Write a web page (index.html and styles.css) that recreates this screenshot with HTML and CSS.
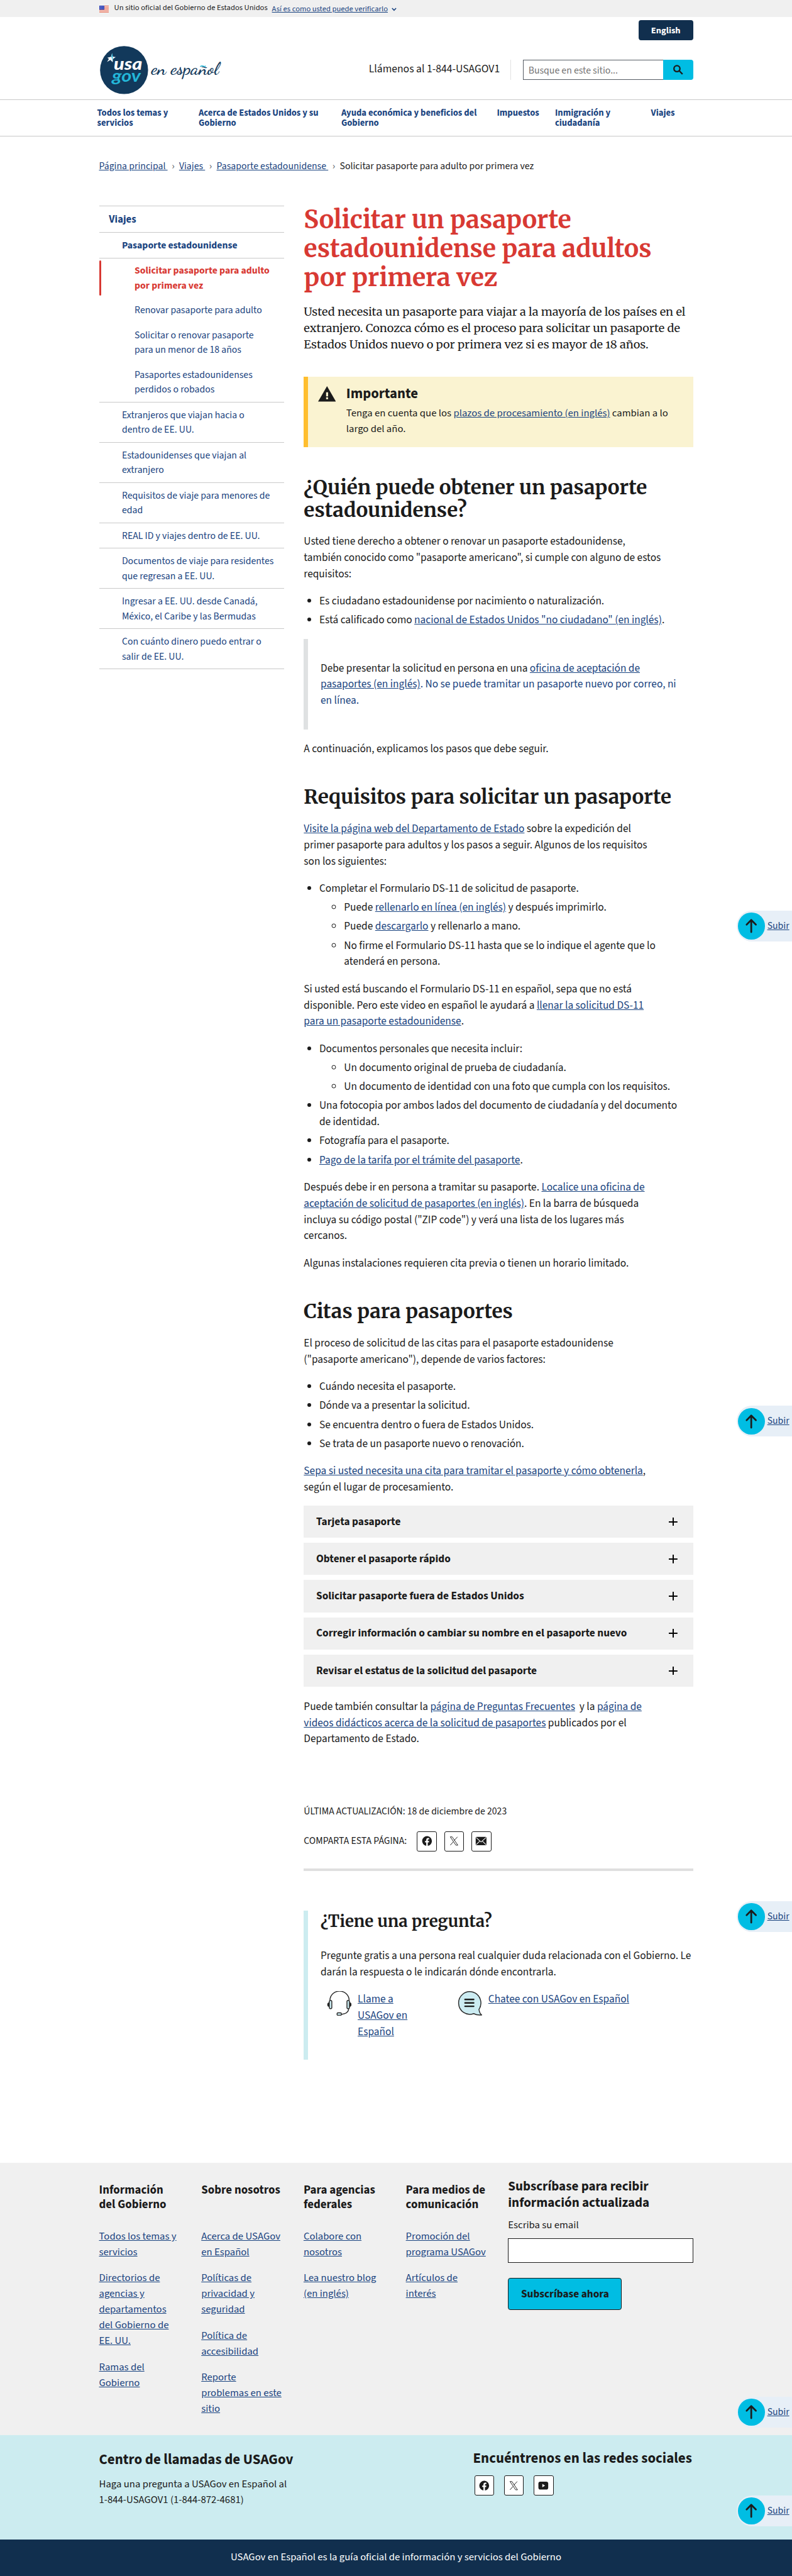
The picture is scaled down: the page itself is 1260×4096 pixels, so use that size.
FILE: index.html
```html
<!DOCTYPE html>
<html lang="es">
<head>
<meta charset="utf-8">
<title>Solicitar pasaporte para adulto por primera vez | USAGov</title>
<link rel="stylesheet" href="styles.css">
</head>
<body>
<svg class="sprite" aria-hidden="true">
  <symbol id="i-fb" viewBox="0 0 24 24"><path d="M22 12a10 10 0 1 0-11.6 9.9v-7H7.9V12h2.5V9.800c0-2.500 1.500-3.900 3.800-3.900 1.100 0 2.200.2 2.200.2v2.500h-1.300c-1.200 0-1.600.8-1.600 1.600V12h2.800l-.4 2.900h-2.400v7A10 10 0 0 0 22 12z"/></symbol>
  <symbol id="i-x" viewBox="0 0 24 24"><path fill="none" stroke="currentColor" stroke-width="1.200" d="M4.300 3.500h3.900L19.700 20.500h-3.900zM19 3.500l-6.700 7.300M10.800 13.200 4.300 20.500"/></symbol>
  <symbol id="i-mail" viewBox="0 0 24 24"><rect x="1" y="3.500" width="22" height="17" rx="2"/><path fill="none" stroke="#fff" stroke-width="1.300" d="M2 5l10 9L22 5M2 19.500l7.500-7.500M22 19.500 14.500 12"/></symbol>
  <symbol id="i-yt" viewBox="0 0 24 24"><rect x="2" y="4" width="20" height="16" rx="4"/><path fill="#fff" d="M10 8.500v7l5.500-3.500z"/></symbol>
  <symbol id="i-up" viewBox="0 0 43 43"><path fill="none" stroke="#1b1b1b" stroke-width="2.800" stroke-linecap="round" stroke-linejoin="round" d="M21.500 31.500V12M14 19.500l7.500-7.500 7.500 7.500"/></symbol>
</svg>

<div class="banner">
  <svg class="flag" viewBox="0 0 16 11"><rect width="16" height="11" fill="#fff"/><path stroke="#db3e1f" stroke-opacity=".85" d="M0 .5h16M0 2.500h16M0 4.500h16M0 6.500h16M0 8.500h16M0 10.500h16"/><rect width="8" height="6.500" fill="#1e33b1"/><path stroke="#fff" stroke-dasharray="1 1.300" stroke-width=".8" d="M1 1.500h6.500M1 3.200h6.500M1 5h6.500"/></svg>
  <span>Un sitio oficial del Gobierno de Estados Unidos</span>
  <a class="banner-link" href="#">Así es como usted puede verificarlo</a>
  <svg class="chev" viewBox="0 0 8 6"><path fill="none" stroke="#1a4480" stroke-width="1.600" d="M.8 1 4 4.400 7.200 1"/></svg>
</div>

<header class="header">
  <div class="lang"><a class="lang-btn" href="#">English</a></div>
  <div class="brand">
    <svg class="logo" viewBox="0 0 200 80">
      <circle cx="40" cy="40" r="38.800" fill="#12395b"/>
      <path fill="#fff" d="M13 20l6-1.500 1.500-5.500 1.500 5.500 4.500.5-4.500 3-.5 5.500-3.500-4-5.500 3.500 3-5z"/>
      <path fill="#23b7d9" d="M19.500 18.300 21.300 12.500l.2 6 .3 8.500-1-5z"/>
      <text class="logo-bold" x="23.500" y="40" textLength="46" lengthAdjust="spacingAndGlyphs" fill="#fff">usa</text>
      <text class="logo-mid" x="20.500" y="58.500" textLength="46.500" lengthAdjust="spacingAndGlyphs" fill="#23b7d9">gov</text>
      <text class="logo-script" x="84" y="47" textLength="109" lengthAdjust="spacingAndGlyphs" fill="#12395b">en español</text>
      <path fill="none" stroke="#23b7d9" stroke-width="1.600" d="M163 34.500q3-2 5-.8t4-.2"/>
    </svg>
    <span class="phone">Llámenos al 1-844-USAGOV1</span>
    <form class="search">
      <span class="search-box">Busque en este sitio...</span>
      <span class="search-btn"><svg viewBox="0 0 24 24"><path fill="none" stroke="#1b1b1b" stroke-width="2.800" d="M15.500 10a5.800 5.800 0 1 1-11.600 0 5.800 5.800 0 0 1 11.600 0zM14 14l6.500 6.500"/></svg></span>
    </form>
  </div>
</header>

<nav class="nav">
  <a href="#">Todos los temas y<br>servicios</a>
  <a href="#">Acerca de Estados Unidos y su<br>Gobierno</a>
  <a href="#">Ayuda económica y beneficios del<br>Gobierno</a>
  <a href="#">Impuestos</a>
  <a href="#">Inmigración y<br>ciudadanía</a>
  <a href="#">Viajes</a>
</nav>

<ol class="crumbs">
  <li><a href="#">Página principal&nbsp;</a></li>
  <li><a href="#">Viajes&nbsp;</a></li>
  <li><a href="#">Pasaporte estadounidense&nbsp;</a></li>
  <li>Solicitar pasaporte para adulto por primera vez</li>
</ol>

<div class="page">
  <aside class="side">
    <ul>
      <li class="top"><a href="#">Viajes</a></li>
      <li class="parent"><a href="#">Pasaporte estadounidense</a>
        <ul class="sub">
          <li class="current"><a href="#">Solicitar pasaporte para adulto<br>por primera vez</a></li>
          <li><a href="#">Renovar pasaporte para adulto</a></li>
          <li><a href="#">Solicitar o renovar pasaporte<br>para un menor de 18 años</a></li>
          <li><a href="#">Pasaportes estadounidenses<br>perdidos o robados</a></li>
        </ul>
      </li>
      <li><a href="#">Extranjeros que viajan hacia o<br>dentro de EE. UU.</a></li>
      <li><a href="#">Estadounidenses que viajan al<br>extranjero</a></li>
      <li><a href="#">Requisitos de viaje para menores de<br>edad</a></li>
      <li><a href="#">REAL ID y viajes dentro de EE. UU.</a></li>
      <li><a href="#">Documentos de viaje para residentes<br>que regresan a EE. UU.</a></li>
      <li><a href="#">Ingresar a EE. UU. desde Canadá,<br>México, el Caribe y las Bermudas</a></li>
      <li class="last"><a href="#">Con cuánto dinero puedo entrar o<br>salir de EE. UU.</a></li>
    </ul>
  </aside>

  <main class="main">
    <h1>Solicitar un pasaporte<br>estadounidense para adultos<br>por primera vez</h1>
    <p class="lead">Usted necesita un pasaporte para viajar a la mayoría de los países en el<br>extranjero. Conozca cómo es el proceso para solicitar un pasaporte de<br>Estados Unidos nuevo o por primera vez si es mayor de 18 años.</p>

    <div class="alert">
      <svg class="alert-icon" viewBox="0 0 29 25"><path fill="#1b1b1b" d="M14.500 0 29 25H0z"/><path fill="#faf3d1" d="M13 10h3.200v6.500H13zM13 18h3.200v3.200H13z"/></svg>
      <div>
        <h3>Importante</h3>
        <p>Tenga en cuenta que los <a href="#">plazos de procesamiento (en inglés)</a> cambian a lo<br>largo del año.</p>
      </div>
    </div>

    <h2>¿Quién puede obtener un pasaporte<br>estadounidense?</h2>
    <p>Usted tiene derecho a obtener o renovar un pasaporte estadounidense,<br>también conocido como "pasaporte americano", si cumple con alguno de estos<br>requisitos:</p>
    <ul>
      <li>Es ciudadano estadounidense por nacimiento o naturalización.</li>
      <li>Está calificado como <a href="#">nacional de Estados Unidos "no ciudadano" (en inglés)</a>.</li>
    </ul>
    <div class="callout">Debe presentar la solicitud en persona en una <span class="blue"><a href="#">oficina de aceptación de<br>pasaportes (en inglés)</a>. No se puede tramitar un pasaporte nuevo por correo, ni<br>en línea.</span></div>
    <p>A continuación, explicamos los pasos que debe seguir.</p>

    <h2>Requisitos para solicitar un pasaporte</h2>
    <p><a href="#">Visite la página web del Departamento de Estado</a> sobre la expedición del<br>primer pasaporte para adultos y los pasos a seguir. Algunos de los requisitos<br>son los siguientes:</p>
    <ul>
      <li>Completar el Formulario DS-11 de solicitud de pasaporte.
        <ul>
          <li>Puede <a href="#">rellenarlo en línea (en inglés)</a> y después imprimirlo.</li>
          <li>Puede <a href="#">descargarlo</a> y rellenarlo a mano.</li>
          <li>No firme el Formulario DS-11 hasta que se lo indique el agente que lo<br>atenderá en persona.</li>
        </ul>
      </li>
    </ul>
    <p>Si usted está buscando el Formulario DS-11 en español, sepa que no está<br>disponible. Pero este video en español le ayudará a <a href="#">llenar la solicitud DS-11<br>para un pasaporte estadounidense</a>.</p>
    <ul>
      <li>Documentos personales que necesita incluir:
        <ul>
          <li>Un documento original de prueba de ciudadanía.</li>
          <li>Un documento de identidad con una foto que cumpla con los requisitos.</li>
        </ul>
      </li>
      <li>Una fotocopia por ambos lados del documento de ciudadanía y del documento<br>de identidad.</li>
      <li>Fotografía para el pasaporte.</li>
      <li><a href="#">Pago de la tarifa por el trámite del pasaporte</a>.</li>
    </ul>
    <p>Después debe ir en persona a tramitar su pasaporte. <a href="#">Localice una oficina de<br>aceptación de solicitud de pasaportes (en inglés)</a>. En la barra de búsqueda<br>incluya su código postal ("ZIP code") y verá una lista de los lugares más<br>cercanos.</p>
    <p>Algunas instalaciones requieren cita previa o tienen un horario limitado.</p>

    <h2>Citas para pasaportes</h2>
    <p>El proceso de solicitud de las citas para el pasaporte estadounidense<br>("pasaporte americano"), depende de varios factores:</p>
    <ul>
      <li>Cuándo necesita el pasaporte.</li>
      <li>Dónde va a presentar la solicitud.</li>
      <li>Se encuentra dentro o fuera de Estados Unidos.</li>
      <li>Se trata de un pasaporte nuevo o renovación.</li>
    </ul>
    <p><a href="#">Sepa si usted necesita una cita para tramitar el pasaporte y cómo obtenerla</a>,<br>según el lugar de procesamiento.</p>

    <div class="accordion">
      <div class="acc">Tarjeta pasaporte<i class="plus"></i></div>
      <div class="acc">Obtener el pasaporte rápido<i class="plus"></i></div>
      <div class="acc">Solicitar pasaporte fuera de Estados Unidos<i class="plus"></i></div>
      <div class="acc">Corregir información o cambiar su nombre en el pasaporte nuevo<i class="plus"></i></div>
      <div class="acc">Revisar el estatus de la solicitud del pasaporte<i class="plus"></i></div>
    </div>
    <p>Puede también consultar la <a href="#">página de Preguntas Frecuentes</a>&nbsp; y la <a href="#">página de<br>videos didácticos acerca de la solicitud de pasaportes</a> publicados por el<br>Departamento de Estado.</p>

    <div class="updated">ÚLTIMA ACTUALIZACIÓN: 18 de diciembre de 2023</div>
    <div class="share">
      <span>COMPARTA ESTA PÁGINA:</span>
      <a class="sq" href="#"><svg><use href="#i-fb"/></svg></a>
      <a class="sq" href="#"><svg><use href="#i-x"/></svg></a>
      <a class="sq" href="#"><svg><use href="#i-mail"/></svg></a>
    </div>
    <hr>

    <section class="ask">
      <h2>¿Tiene una pregunta?</h2>
      <p>Pregunte gratis a una persona real cualquier duda relacionada con el Gobierno. Le<br>darán la respuesta o le indicarán dónde encontrarla.</p>
      <div class="ask-row">
        <div class="ask-item">
          <svg viewBox="0 0 40 40"><g fill="none" stroke="#2b2b2b" stroke-width="1.500"><path d="M5 15a15.500 15 0 0 1 31 0"/><path d="M35.500 28c-.5 6-5 9-12 9.500"/><rect x="4" y="15" width="4" height="13.500" rx="2" fill="#ccecf2"/><rect x="32.500" y="15" width="4" height="13.500" rx="2" fill="#ccecf2"/><rect x="16.500" y="35" width="7" height="4" rx="1.500" fill="#ccecf2"/></g><path fill="#1b1b1b" d="M3.500 18v7.500C-.2 25-.2 18.500 3.500 18zM37 18v7.500c3.700-.5 3.700-7 0-7.500z"/></svg>
          <a href="#">Llame a<br>USAGov en<br>Español</a>
        </div>
        <div class="ask-item">
          <svg viewBox="0 0 40 40"><path fill="#ccecf2" stroke="#2b2b2b" stroke-width="1.500" stroke-linejoin="round" d="M34.500 29.500A18 18.300 0 1 0 26 36.300c4 2.200 8 2.700 12.800 2.200-2.800-2.500-4-5.500-4.300-9z"/><path stroke="#1b1b1b" stroke-width="2.400" stroke-linecap="round" d="M12 13.500h14M12 19h14M12 24.500h14"/></svg>
          <a href="#">Chatee con USAGov en Español</a>
        </div>
      </div>
    </section>
  </main>
</div>

<footer>
  <div class="foot">
    <div class="foot-col">
      <h3>Información<br>del Gobierno</h3>
      <a href="#">Todos los temas y<br>servicios</a>
      <a href="#">Directorios de<br>agencias y<br>departamentos<br>del Gobierno de<br>EE. UU.</a>
      <a href="#">Ramas del<br>Gobierno</a>
    </div>
    <div class="foot-col">
      <h3>Sobre nosotros</h3>
      <a href="#">Acerca de USAGov<br>en Español</a>
      <a href="#">Políticas de<br>privacidad y<br>seguridad</a>
      <a href="#">Política de<br>accesibilidad</a>
      <a href="#">Reporte<br>problemas en este<br>sitio</a>
    </div>
    <div class="foot-col">
      <h3>Para agencias<br>federales</h3>
      <a href="#">Colabore con<br>nosotros</a>
      <a href="#">Lea nuestro blog<br>(en inglés)</a>
    </div>
    <div class="foot-col">
      <h3>Para medios de<br>comunicación</h3>
      <a href="#">Promoción del<br>programa USAGov</a>
      <a href="#">Artículos de<br>interés</a>
    </div>
    <form class="subscribe">
      <h3>Subscríbase para recibir<br>información actualizada</h3>
      <label for="email">Escriba su email</label>
      <input id="email" type="text">
      <button type="button">Subscríbase ahora</button>
    </form>
  </div>
  <div class="contact">
    <div>
      <h3>Centro de llamadas de USAGov</h3>
      <p>Haga una pregunta a USAGov en Español al<br>1-844-USAGOV1 (1-844-872-4681)</p>
    </div>
    <div class="social">
      <h3>Encuéntrenos en las redes sociales</h3>
      <div class="social-row">
        <a class="sq" href="#"><svg><use href="#i-fb"/></svg></a>
        <a class="sq" href="#"><svg><use href="#i-x"/></svg></a>
        <a class="sq" href="#"><svg><use href="#i-yt"/></svg></a>
      </div>
    </div>
  </div>
  <div class="ident">USAGov en Español es la guía oficial de información y servicios del Gobierno</div>
</footer>

<a class="subir s1" href="#"><svg><use href="#i-up"/></svg><span>Subir</span></a>
<a class="subir s2" href="#"><svg><use href="#i-up"/></svg><span>Subir</span></a>
<a class="subir s3" href="#"><svg><use href="#i-up"/></svg><span>Subir</span></a>
<a class="subir s4" href="#"><svg><use href="#i-up"/></svg><span>Subir</span></a>
<a class="subir s5" href="#"><svg><use href="#i-up"/></svg><span>Subir</span></a>
</body>
</html>
```
FILE: styles.css
```css
* { box-sizing: border-box; }
html { background: #fff; overflow: hidden; }
body {
  margin: 0;
  width: 1280px;
  height: 4161px;
  zoom: .984375;
  position: relative;
  overflow: hidden;
  color: #1b1b1b;
  font: 17.6px/26.3px "Source Sans 3", "Source Sans Pro", "Noto Sans CJK JP", "Open Sans", sans-serif;
  white-space: nowrap;
}
.sprite { display: none; }
a { color: #1a4480; }
h1, h2, h3, p, ul, ol { margin: 0; padding: 0; }
h1, h2, .lead { font-family: "Merriweather", "DejaVu Serif Condensed", "DejaVu Serif", serif; }
svg { flex: none; }

.banner { display: flex; align-items: center; height: 27px; padding: 0 160px; background: #f0f0f0; font-size: 12.8px; line-height: 26px; }
.flag { width: 16px; height: 11px; margin: 2px 8.500px 0 0; }
.banner-link { margin: 3px 6.500px 0 7px; }
.chev { width: 8px; height: 6px; margin-top: 3px; }

.header { padding: 0 160px; height: 133px; }
.lang { display: flex; justify-content: flex-end; padding-top: 5px; }
.lang-btn { width: 88px; height: 33px; border-radius: 4px; background: #112f4e; color: #fff; font-weight: 700; font-size: 14.700px; line-height: 34px; text-align: center; text-decoration: none; }
.brand { display: flex; align-items: center; margin-top: 8px; height: 80px; }
.logo { width: 200px; height: 80px; margin-right: 236px; }
.logo-bold { font: italic 900 27px "Lato", "Open Sans", sans-serif; }
.logo-mid { font: italic 700 27px "Lato", "Open Sans", sans-serif; }
.logo-script { font: 600 28px "Dancing Script", cursive; }
.phone { width: 230px; border-right: 2px solid #e2e2e2; height: 32px; line-height: 30px; font-size: 17.920px; }
.search { display: flex; margin-left: 19px; height: 32px; width: 275px; }
.search-box { flex: 1; border: 1px solid #565c65; border-right: 0; padding-left: 8px; font-size: 16px; line-height: 33px; color: #757575; }
.search-btn { width: 48px; background: #00bde3; border-radius: 0 4px 4px 0; display: flex; align-items: center; justify-content: center; }
.search-btn svg { width: 20px; height: 20px; }

.nav { display: grid; grid-template-columns: 164px 230.500px 251.500px 94px 155px 80px; height: 60px; border: solid #c9c9c9; border-width: 1px 0; padding: 14px 0 0 157px; }
.nav a { font-weight: 700; font-size: 14.880px; line-height: 16px; text-decoration: none; }

.crumbs { display: flex; list-style: none; padding: 37.500px 160px .5px; font-size: 16px; line-height: 24px; }
.crumbs li + li::before { content: "›"; color: #565c65; margin: 0 7.300px 0 6.700px; font-size: 17px; }

.page { display: grid; grid-template-columns: 299px 629px; column-gap: 32px; padding: 48px 160px 0; height: 3212px; }

.side { padding-top: 2px; font-size: 16px; line-height: 24px; }
.side ul { list-style: none; }
.side a { display: block; padding: 9px 0 7px 37px; border-top: 1px solid #c9c9c9; text-decoration: none; }
.side .top a { padding-left: 16px; font-size: 16.960px; line-height: 26px; font-weight: 700; }
.side .parent > a { font-weight: 700; border-bottom: 1px solid #c9c9c9; }
.side .sub a { border: 0; padding-left: 57.500px; }
.side .sub .current a { position: relative; color: #d83933; font-weight: 700; }
.side .current a::before { content: ""; position: absolute; left: 0; top: 4px; bottom: 4px; width: 4px; border-radius: 2px; background: #d83933; }
.side .last { border-bottom: 1px solid #c9c9c9; }

.main { padding-top: .8px; }
h1 { font-size: 39.880px; line-height: 47px; color: #d83933; }
.lead { margin-top: 18.500px; font-size: 18.410px; line-height: 26.600px; font-variant-numeric: oldstyle-nums; }
.alert { display: flex; margin-top: 38.900px; height: 113px; border-left: 8px solid #ffbe2e; background: #faf3d1; padding: 14px 0 0 15.500px; font-size: 16.960px; line-height: 25.400px; }
.alert-icon { width: 29px; height: 25px; margin: 1px 17px 0 0; }
.alert h3 { font-size: 23.100px; line-height: 28px; margin-bottom: 4.500px; }
.main h2 { font-size: 31.940px; line-height: 36.700px; margin: 46.600px 0 19.800px; }
.main > p + p, .main > p + ul, .main > ul + p { margin-top: 17.600px; }
.main ul { padding-left: 25px; }
.main li::marker { font-size: 17.600px; }
.main li + li, .main li ul { margin-top: 4.400px; }
.main li ul { padding-left: 40px; }
.callout { margin: 17px 0 18px; height: 146px; border-left: 8px solid #dfe1e2; padding: 34px 0 0 20px; }
.blue { color: #1a4480; }

.accordion { display: grid; gap: 8px; margin: 16.300px 0 18.800px; }
.acc { display: flex; align-items: center; justify-content: space-between; height: 52.200px; padding: 0 25px 0 20px; background: #f0f0f0; font-weight: 700; }
.plus { width: 14px; height: 14px; background: linear-gradient(#000, #000) center / 14px 2px no-repeat, linear-gradient(#000, #000) center / 2px 14px no-repeat; }

.updated { margin-top: 91.600px; font-size: 15.950px; line-height: 24px; }
.share { display: flex; align-items: center; gap: 12px; margin-top: 20.200px; font-size: 15.950px; }
.share span { margin-right: 4.500px; }
.sq { width: 32px; height: 32px; border: 2px solid #1b1b1b; border-radius: 3px; background: #fff; color: #1b1b1b; display: flex; align-items: center; justify-content: center; fill: #1b1b1b; }
.sq svg { width: 19px; height: 19px; }
hr { margin: 28px 0 64px; border: 0; height: 4px; background: #dfdfdf; }

.ask { height: 241px; border-left: 8px solid #ccecf0; padding: 2.500px 0 0 20px; }
.main .ask h2 { font-size: 26.180px; line-height: 31.400px; margin: 0 0 26.400px; }
.ask-row { display: flex; margin-top: 17px; padding-left: 10px; }
.ask-item { display: flex; gap: 10px; width: 211px; }
.ask-item svg { width: 40px; height: 40px; }

.foot { display: grid; grid-template-columns: repeat(4, 165.300px) 299px; height: 439px; padding: 33.500px 160px 0; background: #f0f0f0; font-size: 16.960px; line-height: 25.400px; }
.foot-col { display: flex; flex-direction: column; align-items: flex-start; gap: 16.500px; }
.foot-col h3 { height: 46px; margin-bottom: 10.500px; font-size: 19.200px; line-height: 23px; }
.subscribe { display: flex; flex-direction: column; align-items: flex-start; margin-top: -8px; }
.subscribe h3 { font-size: 21.400px; line-height: 25.700px; }
.subscribe label { margin: 11px 0 8px; }
.subscribe input { width: 299px; height: 40px; border: 1px solid #1b1b1b; background: #fff; }
.subscribe button { width: 184px; height: 52px; margin-top: 24px; padding: 1px 0 0; border: 1px solid #1b1b1b; border-radius: 4px; background: #00bde3; color: #1b1b1b; font: inherit; font-size: 17.600px; font-weight: 700; }

.contact { display: flex; justify-content: space-between; height: 169px; padding: 26.700px 160px 0; background: #ccecf0; font-size: 16.960px; line-height: 25.400px; }
.contact h3 { font-size: 23.280px; line-height: 28px; margin-bottom: 12.500px; }
.social { margin-top: -1.500px; min-width: 355.500px; }
.social-row { display: flex; gap: 16px; padding-left: 2px; }
.ident { height: 60px; padding-top: 16px; background: #112f4e; color: #fff; font-size: 16.930px; line-height: 25.400px; text-align: center; }

.subir { position: absolute; right: 0; width: 89px; height: 50px; border-radius: 25px 0 0 25px; background: #e7eff7; display: flex; align-items: center; gap: 4px; padding: 1px 0 0 2px; font-size: 16px; }
.subir svg { width: 43px; height: 43px; border-radius: 50%; background: #00bde3; }
.s1 { top: 1470.500px; }
.s2 { top: 2270.500px; }
.s3 { top: 3070.500px; }
.s4 { top: 3871px; }
.s5 { top: 4030.500px; }
```
